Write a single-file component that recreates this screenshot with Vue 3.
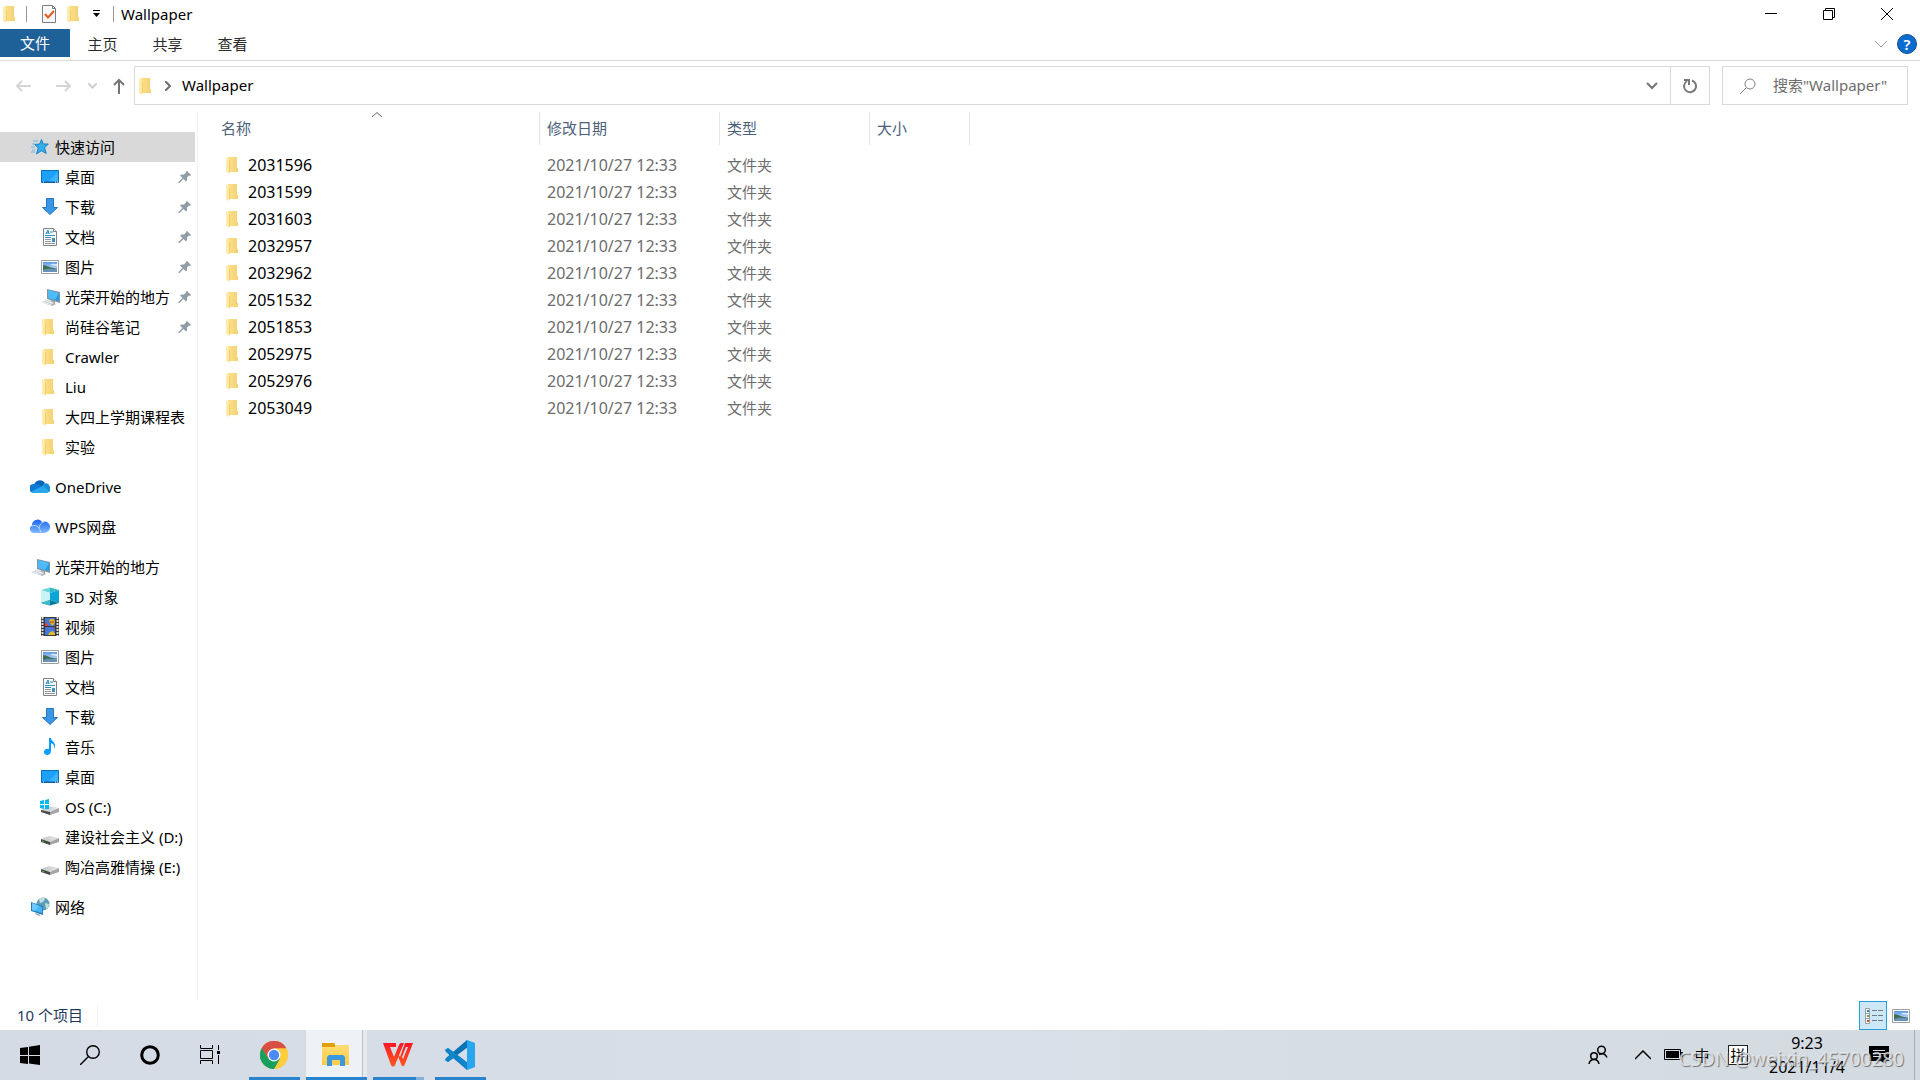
<script setup>
import { ref } from 'vue'

const groups = [
  {
    items: [
      { icon: 'star', label: '快速访问', root: true, selected: true },
      { icon: 'desktop', label: '桌面', pinned: true },
      { icon: 'download', label: '下载', pinned: true },
      { icon: 'document', label: '文档', pinned: true },
      { icon: 'picture', label: '图片', pinned: true },
      { icon: 'computer', label: '光荣开始的地方', pinned: true },
      { icon: 'folder', label: '尚硅谷笔记', pinned: true },
      { icon: 'folder', label: 'Crawler' },
      { icon: 'folder', label: 'Liu' },
      { icon: 'folder', label: '大四上学期课程表' },
      { icon: 'folder', label: '实验' }
    ]
  },
  { items: [{ icon: 'onedrive', label: 'OneDrive', root: true }] },
  { items: [{ icon: 'wpscloud', label: 'WPS网盘', root: true }] },
  {
    items: [
      { icon: 'computer', label: '光荣开始的地方', root: true },
      { icon: 'cube', label: '3D 对象' },
      { icon: 'video', label: '视频' },
      { icon: 'picture', label: '图片' },
      { icon: 'document', label: '文档' },
      { icon: 'download', label: '下载' },
      { icon: 'music', label: '音乐' },
      { icon: 'desktop', label: '桌面' },
      { icon: 'osdrive', label: 'OS (C:)' },
      { icon: 'drive', label: '建设社会主义 (D:)' },
      { icon: 'drive', label: '陶冶高雅情操 (E:)' }
    ]
  },
  { items: [{ icon: 'network', label: '网络', root: true }] }
]

const folders = ['2031596', '2031599', '2031603', '2032957', '2032962', '2051532', '2051853', '2052975', '2052976', '2053049']
const query = ref('')
</script>

<template>
  <div class="screen">
    <svg class="defs" aria-hidden="true">
      <defs>
        <linearGradient id="gFolder" x1="0" x2="1"><stop offset="0" stop-color="#fbe08e" /><stop offset="1" stop-color="#f5d272" /></linearGradient>
        <linearGradient id="gSky" x1="0" x2="0" y1="0" y2="1"><stop offset="0" stop-color="#5b97e8" /><stop offset="1" stop-color="#e4f3fb" /></linearGradient>
        <linearGradient id="gCloud" x1="0" x2="0" y1="0" y2="1"><stop offset="0" stop-color="#1a66ee" /><stop offset="1" stop-color="#7fb9ff" /></linearGradient>
        <linearGradient id="gDrive" x1="0" x2="1"><stop offset="0" stop-color="#c2c3c6" /><stop offset="1" stop-color="#e6e6e8" /></linearGradient>
        <linearGradient id="gWps" x1="0" x2="0" y1="0" y2="1"><stop offset="0" stop-color="#fb1725" /><stop offset="1" stop-color="#ff5a1c" /></linearGradient>
        <linearGradient id="gExp" x1="0" x2="0" y1="0" y2="1"><stop offset="0" stop-color="#ffdd73" /><stop offset="1" stop-color="#fbca4b" /></linearGradient>
      </defs>
      <symbol id="folder" viewBox="0 0 20 20">
        <path d="M4 2h9v11h1v4H4z" fill="url(#gFolder)" /><path d="M2 2l4 3v11l-1 3-3-2z" fill="#ffeaa9" /><path d="M5 5l1 1v11l-1 1z" fill="#f2cd69" />
      </symbol>
      <symbol id="star" viewBox="0 0 20 20">
        <path d="M11.500 2.500l1.800 4.500h5l-3.700 3.800 1.600 5.600-4.700-2.700-5 3.200 1.800-5.900-3.600-3.500 5-.5z" fill="#33aeea" stroke="#1d7fc4" stroke-width="1" />
        <path d="M3 4h5M2 7h3M1 10h4M2 13h3M1 15h4" stroke="#6cb6e6" stroke-width="1" />
      </symbol>
      <symbol id="desktop" viewBox="0 0 20 20">
        <path d="M1.500 3.500h17v12h-17z" fill="#1ba1fa" stroke="#0e70b8" /><path d="M8 15L18 5v10z" fill="#3db3ff" /><path d="M2 15h16" stroke="#0b568f" /><path d="M3 15h1M15 15h1M17 15h1" stroke="#fff" />
      </symbol>
      <symbol id="download" viewBox="0 0 20 20"><path d="M6.500 1.500h7v9h4L10 17.500 2.500 10.500h4z" fill="#3b97e3" stroke="#2378c4" /></symbol>
      <symbol id="document" viewBox="0 0 20 20">
        <path d="M3.500 1.500h10l3 3v14h-13z" fill="#f8fafb" stroke="#818486" /><path d="M13.500 1.500v3h3" fill="#fff" stroke="#818486" />
        <path d="M6 7l2-4 1 4M6 6h3M10 5h3" fill="none" stroke="#258ac5" /><path d="M5 8.500h10M5 10.500h6" stroke="#3392cb" /><path d="M5 12.500h6M5 14.500h6M5 16.500h10" stroke="#939799" /><path d="M12 11h3v4h-3z" fill="#438fc1" />
      </symbol>
      <symbol id="picture" viewBox="0 0 20 20">
        <path d="M1.500 3.500h17v13h-17z" fill="#fff" stroke="#9b9ea2" /><path d="M3 5h14v10H3z" fill="url(#gSky)" />
        <path d="M3 8c4 0 6 3 14 3.500V13H3z" fill="#426e59" /><path d="M3 13c5-2 9-1 14-1v3H3z" fill="#6793b8" /><path d="M10 8c2-2 5-1 7-1v2z" fill="#fff" opacity=".7" />
      </symbol>
      <symbol id="computer" viewBox="0 0 20 20">
        <path d="M7 2l13 3v11L7 12z" fill="#87939c" /><path d="M8 3l11 3v8L8 11z" fill="#1e9fee" /><path d="M8 3l11 3-4 7-7-2z" fill="#4fbaf8" />
        <path d="M11 13l4 1v3l-5-2z" fill="#8b969c" /><path d="M1 15l6-2 8 2-6 3z" fill="#c9cfd4" /><path d="M10 18l4-2 2 1-4 2z" fill="#a9b1b8" /><path d="M3 15l6 2M6 14l6 2" stroke="#eef1f3" />
      </symbol>
      <symbol id="onedrive" viewBox="0 0 20 20">
        <path d="M4 9a6 6 0 0 1 11-3l-4 5z" fill="#0761b5" /><path d="M4 7c3-1 6 1 9 3l-8 6H3A4 4 0 0 1 4 7z" fill="#0d79d5" /><path d="M14 7c3-2 6 1 6 4a3 3 0 0 1-1 4l-7-5z" fill="#1490df" /><path d="M2 14l11-5 6 5c0 2-2 2-3 2H4c-1 0-2-1-2-2z" fill="#28a8ea" />
      </symbol>
      <symbol id="wpscloud" viewBox="0 0 20 20">
        <path d="M4 16a4 4 0 0 1-2-7.500A5.500 5.500 0 0 1 12 5a5 5 0 0 1 5 10l-3 1z" fill="url(#gCloud)" /><path d="M2 9c5-2 8 2 9 7M9 11c1-4 2-5 5-6" fill="none" stroke="#b9dcff" stroke-width="1" />
      </symbol>
      <symbol id="cube" viewBox="0 0 20 20">
        <path d="M1 3l9-2.500V6z" fill="#69d5dd" /><path d="M10 .5L19 3l-9 3z" fill="#35b9c8" /><path d="M1 3l9 3v7l-9 3z" fill="#c9f4f5" /><path d="M10 6l9-3v13l-9-3z" fill="#0ba6d7" /><path d="M1 16l9-3 9 3-9 2.500z" fill="#067c9d" /><path d="M1 16l9-3v5.500z" fill="#3cbcc8" />
      </symbol>
      <symbol id="video" viewBox="0 0 20 20">
        <path d="M1 0h18v19H1z" fill="#38393b" /><path d="M2.500 0v19M17.500 0v19" stroke="#d9dada" stroke-width="2" stroke-dasharray="2 1" /><path d="M5 1h10v8H5zM5 10h10v8H5z" fill="#4778d8" />
        <path d="M9 4a3 3 0 1 1 5 3l-2 2z" fill="#e0b61e" /><path d="M5 6l3 1v2H5z" fill="#e24439" /><path d="M10 15l3-1 2 3v1H8z" fill="#e5bb25" /><path d="M10 5h4M13 11h2" stroke="#bd3328" stroke-width="1" />
      </symbol>
      <symbol id="music" viewBox="0 0 20 20"><path d="M9 1h2c0 3 5 4 4 9l-1 2c1-4-1-5-3-6v8c0 5-7 5-7 1 0-3 3-4 5-3z" fill="#079eff" /></symbol>
      <symbol id="drive" viewBox="0 0 20 20"><path d="M1 12l8-3 10 2-9 4z" fill="url(#gDrive)" /><path d="M1 12l9 3v3l-9-3z" fill="#454947" /><path d="M10 15l9-4v4l-9 3z" fill="#a3a4a5" /><path d="M2 14l2 1" stroke="#54c83c" /></symbol>
      <symbol id="osdrive" viewBox="0 0 20 20"><path d="M1 13l8-4 10 2-9 4z" fill="url(#gDrive)" /><path d="M1 13l9 2v3l-9-3z" fill="#454947" /><path d="M10 15l9-4v4l-9 3z" fill="#a3a4a5" /><path d="M0 4l4-1v4H0zM5 3l4-1v5H5zM0 8h4v4l-4-1zM5 8h4v4H5z" fill="#0ab6ef" /></symbol>
      <symbol id="network" viewBox="0 0 20 20">
        <circle cx="13" cy="7" r="6.500" fill="#5a9cba" /><path d="M9 2c3-2 5-1 6 0l-2 3-3 1zM15 6l4 1c0 3-2 5-3 5z" fill="#c1dfd8" /><path d="M1 5l12 4v9L1 14z" fill="#277fb5" /><path d="M2 6l10 4v6L2 13z" fill="#43b4f4" /><path d="M2 6l7 3-4 5-3-1z" fill="#6bc9fc" /><path d="M6 16l5 2-2 1-4-2z" fill="#9caab2" />
      </symbol>
      <symbol id="pin" viewBox="0 0 14 14"><path d="M9 1l4 4-1 1-1-.5-2 2c.5 2 0 3-1 4L5.500 9 1.500 13H.5v-1L4.500 8 2 5.500c1-1 2-1.300 4-1l2-2L8 1.500z" fill="#929ca4" /></symbol>
    </svg>

    <header class="titlebar">
      <svg class="ico"><use href="#folder" /></svg>
      <i class="bar bar-first"></i>
      <button class="quick" aria-label="属性">
        <svg width="16" height="20" viewBox="0 0 16 20"><path d="M1.500 1.500h10l3 3v14h-13z" fill="#f7f8f9" stroke="#7c7f81" /><path d="M11.500 1.500v3h3" fill="none" stroke="#7c7f81" /><path d="M4 10l3 3.500L13 7" fill="none" stroke="#e8591c" stroke-width="2" /></svg>
      </button>
      <button class="quick" aria-label="新建文件夹"><svg class="ico"><use href="#folder" /></svg></button>
      <button class="quick narrow" aria-label="自定义快速访问工具栏"><svg width="7" height="8"><path d="M0 .5h7" stroke="#000" /><path d="M0 3h7L3.500 7z" /></svg></button>
      <i class="bar"></i>
      <h1>Wallpaper</h1>
      <div class="window-buttons">
        <button aria-label="最小化"><svg width="12" height="12"><path d="M0 5.500h12" stroke="#000" /></svg></button>
        <button aria-label="还原"><svg width="12" height="12" fill="none" stroke="#000"><path d="M.5 2.500h9v9h-9zM2.500 2.500v-2h9v9h-2" /></svg></button>
        <button aria-label="关闭"><svg width="12" height="12"><path d="M0 0l12 12M12 0L0 12" stroke="#000" /></svg></button>
      </div>
    </header>

    <div class="ribbon">
      <button class="tab file">文件</button>
      <button class="tab">主页</button>
      <button class="tab">共享</button>
      <button class="tab">查看</button>
      <div class="ribbon-end">
        <button aria-label="展开功能区"><svg width="12" height="8" fill="none"><path d="M0 1l6 6 6-6" stroke="#9a9da0" /></svg></button>
        <button class="help" aria-label="帮助">?</button>
      </div>
    </div>

    <div class="navbar">
      <button class="step" aria-label="后退"><svg width="16" height="12" fill="none" stroke="#d5d5d5" stroke-width="2"><path d="M15 6H1M6 1L1 6l5 5" /></svg></button>
      <button class="step" aria-label="前进"><svg width="16" height="12" fill="none" stroke="#d5d5d5" stroke-width="2"><path d="M1 6h14M10 1l5 5-5 5" /></svg></button>
      <button class="small" aria-label="最近浏览的位置"><svg width="9" height="6" fill="none" stroke="#d0d0d0" stroke-width="2"><path d="M0 0l4.500 4.500L9 0" /></svg></button>
      <button class="small" aria-label="向上"><svg width="12" height="16" fill="none" stroke="#757575" stroke-width="2"><path d="M6 16V2M1 7l5-5 5 5" /></svg></button>
      <div class="address">
        <svg class="ico"><use href="#folder" /></svg>
        <svg class="crumb" width="6" height="10" fill="none" stroke="#707070" stroke-width="2"><path d="M0 0l5 5-5 5" /></svg>
        <a href="#">Wallpaper</a>
        <button class="drop" aria-label="以前的位置"><svg width="12" height="8" fill="none" stroke="#757575" stroke-width="2"><path d="M1 1l5 5 5-5" /></svg></button>
        <button class="refresh" aria-label="刷新"><svg width="16" height="16" fill="none" stroke="#777" stroke-width="2"><path d="M10 2.500a6 6 0 1 1-5 .5M2 2h5v5" /></svg></button>
      </div>
      <label class="search">
        <svg width="16" height="16" fill="none" stroke="#808080"><circle cx="10" cy="6" r="5" /><path d="M6 10l-6 6" /></svg>
        <input v-model="query" type="text" placeholder="搜索&quot;Wallpaper&quot;" aria-label="搜索" />
      </label>
    </div>

    <div class="body">
      <nav class="sidebar">
        <ul v-for="(group, g) in groups" :key="g">
          <li v-for="item in group.items" :key="item.label">
            <a href="#" class="node" :class="{ root: item.root, selected: item.selected }">
              <svg class="ico"><use :href="'#' + item.icon" /></svg>
              <span>{{ item.label }}</span>
              <svg v-if="item.pinned" class="pin"><use href="#pin" /></svg>
            </a>
          </li>
        </ul>
      </nav>

      <main class="files">
        <table>
          <thead>
            <tr>
              <th class="c-name"><button>名称<svg class="sort" width="10" height="6" fill="none" stroke="#666"><path d="M0 5l5-4.500L10 5" /></svg></button></th>
              <th class="c-date"><button>修改日期</button></th>
              <th class="c-type"><button>类型</button></th>
              <th class="c-size"><button>大小</button></th>
            </tr>
          </thead>
          <tbody>
            <tr v-for="name in folders" :key="name">
              <td class="name"><div><svg class="ico"><use href="#folder" /></svg>{{ name }}</div></td>
              <td class="date">2021/10/27 12:33</td>
              <td>文件夹</td>
              <td></td>
            </tr>
          </tbody>
        </table>
      </main>
    </div>

    <footer class="status">
      <span class="count">10 个项目</span>
      <div class="views">
        <button class="view on" aria-label="详细信息">
          <svg width="20" height="18" fill="none"><path d="M2.500 1.500h4v15h-4zM2 6.500h5M2 11.500h5" stroke="#999fa5" fill="#fff" /><path d="M4 4h2" stroke="#3388c4" stroke-width="2" /><path d="M4 9h2" stroke="#759f33" stroke-width="2" /><path d="M4 14h2" stroke="#d14e2d" stroke-width="2" /><path d="M9 3.500h5M15 3.500h5M9 8.500h5M15 8.500h5M9 13.500h5M15 13.500h5" stroke="#747a80" /></svg>
        </button>
        <button class="view" aria-label="大图标"><svg class="ico"><use href="#picture" /></svg></button>
      </div>
    </footer>

    <div class="taskbar">
      <button class="sys" aria-label="开始"><svg width="20" height="20"><path d="M0 3l8-1v8H0zM9 1.800L20 0v10H9zM0 11h8v8l-8-1zM9 11h11v9L9 18.500z" /></svg></button>
      <button class="sys" aria-label="搜索"><svg width="20" height="20" fill="none" stroke="#000" stroke-width="1.400"><circle cx="13" cy="7" r="6.300" /><path d="M8.500 11.500L0 20" /></svg></button>
      <button class="sys" aria-label="Cortana"><svg width="20" height="20" fill="none" stroke="#000" stroke-width="3"><circle cx="10" cy="10" r="8.300" /></svg></button>
      <button class="sys" aria-label="任务视图"><svg width="20" height="20" fill="none" stroke="#000" stroke-width="1"><path d="M.5 0v3.500h12V0M.5 5.500h12v8H.5zM.5 19v-3.500h12V19M18.500 0v5M18.500 10v9" /><path d="M17 6h3v3h-3z" fill="#000" stroke="none" /></svg></button>
      <button class="app first" aria-label="Chrome">
        <svg width="28" height="28" viewBox="0 0 28 28"><circle cx="14" cy="14" r="14" fill="#fcc934" /><path d="M14 14L1.900 7A14 14 0 0 1 26.200 7.200H14z" fill="#d94f43" /><path d="M1.900 7A14 14 0 0 0 14 28l6-10.500L14 14 8 17.500z" fill="#17a05d" /><path d="M14 14l6 3.500L14 28a14 14 0 0 0 12.200-20.800H14z" fill="#fdcd3e" /><path d="M1.900 7l6.100 10.500L14 14V7.200h12.200A14 14 0 0 0 1.900 7z" fill="#d94f43" /><path d="M1.900 7A14 14 0 0 0 14 28l6-10.500H8z" fill="#17a05d" /><circle cx="14" cy="14" r="6.500" fill="#fff" /><circle cx="14" cy="14" r="5.200" fill="#4c8bf5" /></svg>
      </button>
      <button class="app stacked active" aria-label="文件资源管理器">
        <svg width="28" height="24" viewBox="0 0 28 24"><path d="M0 2h27v20H0z" fill="url(#gExp)" /><path d="M0 0h12l1 1v3H0z" fill="#dfa00b" /><path d="M7 12h14l2 2v9h-5v-6h-8v6H5v-9z" fill="#3b98de" /></svg>
      </button>
      <button class="app double" aria-label="WPS Office">
        <svg width="30" height="24" viewBox="0 0 30 24"><path d="M0 0h13v4H7l4 10 5-12c1-2 2-2 3-2h2L12 22c-1 2-3 2-4 0z" fill="url(#gWps)" /><path d="M13 8l4 6 5-14h8l-8 21c-1 3-3 3-4 0z" fill="url(#gWps)" /><path d="M23 4h2l-5 12-1-2z" fill="#d7dde6" /></svg>
      </button>
      <button class="app last" aria-label="Visual Studio Code">
        <svg width="30" height="30" viewBox="0 0 30 30"><path d="M0 10l3-2 20 15-1 7L1 12z" fill="#0c7ec5" /><path d="M0 20l3 2L23 7l-1-7L1 18z" fill="#0874b5" /><path d="M0 20l3 2 8-6 11 14 1-7L3 8 0 10l5 5z" fill="#1185ca" /><path d="M22 0l8 3v24l-8 3z" fill="#28a5ee" /><path d="M14 15l8-7v14z" fill="#d7dde6" /></svg>
      </button>

      <div class="tray">
        <button class="people" aria-label="人脉"><svg width="20" height="20" fill="none" stroke="#000" stroke-width="1.500"><circle cx="13.500" cy="5" r="3.800" /><path d="M11 9.500l3-1c3 0 4 2 5 4" /><circle cx="6" cy="11" r="3.300" /><path d="M1 19c1-6 9-6 10 0" /></svg></button>
        <button class="more" aria-label="显示隐藏的图标"><svg width="16" height="10" fill="none"><path d="M0 9l8-8 8 8" stroke="#000" stroke-width="1.500" /></svg></button>
        <button class="battery" aria-label="电池"><svg width="20" height="12"><path d="M.5 .5h16v10H.5z" fill="none" stroke="#000" /><path d="M2 2h13v7H2zM17 3h2v5h-2z" /></svg></button>
        <button class="ime">中</button>
        <button class="ime"><span class="boxed">拼</span></button>
        <button class="clock"><span>9:23</span><span>2021/11/4</span></button>
        <button class="notice" aria-label="通知"><svg width="20" height="18"><path d="M0 0h20v15h-4v3l-4-3H0z" /><path d="M4 4.500h12M4 7.500h12M4 10.500h8" stroke="#d8dee6" /></svg></button>
        <button class="peek" aria-label="显示桌面"></button>
      </div>
      <div class="watermark">CSDN @weixin_45700280</div>
    </div>
  </div>
</template>

<style>
body { margin: 0; background: #fff; }
</style>

<style scoped>
.screen {
  display: flex;
  flex-direction: column;
  min-height: 100vh;
  font: 15px/20px "Noto Sans", "Noto Sans CJK SC", sans-serif;
  color: #000;
}
.screen * { box-sizing: border-box; }
.defs { position: absolute; width: 0; height: 0; }
button { display: flex; align-items: center; justify-content: center; margin: 0; padding: 0; border: 0; background: none; color: inherit; font: inherit; flex: none; }
a { color: inherit; text-decoration: none; }
svg { flex: none; display: block; }
.ico { width: 20px; height: 20px; }

.titlebar { display: flex; align-items: center; height: 29px; padding: 0 0 2px 1px; }
.bar { width: 1px; height: 16px; background: #999; margin: 0 7px 0 8px; }
.bar-first { margin: 0 9px 0 5px; }
.quick { width: 26px; height: 27px; }
.quick.narrow { width: 17px; }
.titlebar h1 { margin: 0; font-size: 15px; font-weight: 400; }
.window-buttons { display: flex; margin-left: auto; padding-right: 4px; }
.window-buttons button { width: 58px; height: 27px; }

.ribbon { display: flex; height: 32px; border-bottom: 1px solid #dadbdc; color: #2b2b2b; }
.tab { width: 65px; height: 30px; }
.tab.file { width: 70px; height: 28px; background: #1e6199; color: #fff; }
.ribbon-end { display: flex; align-items: center; gap: 10px; margin-left: auto; padding: 0 3px 2px 0; }
.help { width: 20px; height: 20px; border-radius: 50%; border: 1px solid #155291; background: #0a6cce; color: #fff; font-weight: 600; }

.navbar { display: flex; align-items: center; height: 49px; padding: 0 12px 0 4px; }
.step { width: 39px; height: 30px; }
.small { width: 21px; height: 30px; }
.small + .small { width: 31px; }
.address { display: flex; flex: 1; align-items: center; height: 39px; padding-left: 2px; border: 1px solid #d9d9d9; }
.address a { padding-bottom: 2px; }
.crumb { margin: 0 11px 0 8px; }
.drop { width: 36px; height: 37px; margin-left: auto; }
.refresh { width: 39px; height: 37px; border-left: 1px solid #d9d9d9; }
.search { display: flex; align-items: center; gap: 17px; width: 186px; height: 39px; margin-left: 12px; padding-left: 17px; border: 1px solid #d9d9d9; }
.search input { flex: 1; min-width: 0; padding: 0 0 2px; border: 0; outline: 0; background: none; font: inherit; color: #000; }
.search input::placeholder { color: #6d6d6d; opacity: 1; }

.body { display: flex; flex: 1; padding-top: 2px; }
.sidebar { width: 198px; padding-top: 20px; border-right: 1px solid #f2f2f2; }
.sidebar ul { margin: 0 0 10px; padding: 0; list-style: none; }
.node { display: flex; align-items: center; gap: 5px; height: 30px; margin-right: 2px; padding: 0 3px 0 40px; white-space: nowrap; }
.node.root { padding-left: 30px; }
.node.selected { background: #d9d9d9; }
.pin { width: 14px; height: 14px; margin-left: auto; }

.files { flex: 1; }
table { border-collapse: collapse; table-layout: fixed; width: 772px; }
th { padding: 0 0 7px; font-weight: 400; color: #4c607a; }
th button { position: relative; justify-content: flex-start; width: 100%; height: 33px; padding: 0 0 2px 7px; border-right: 1px solid #e5e5e5; }
.c-name { width: 342px; }
.c-name button { padding-left: 23px; }
.c-date { width: 180px; }
.c-type { width: 150px; }
.c-size { width: 100px; }
.sort { position: absolute; top: 0; left: 51%; }
td { height: 27px; padding: 0 0 1px 7px; color: #6d6d6d; }
.name { padding-left: 26px; color: #000; font-size: 16px; }
.name div { display: flex; align-items: center; gap: 4px; }
.date { font-size: 16px; }

.status { display: flex; align-items: center; height: 29px; color: #1e395b; }
.count { padding: 0 14px 2px 17px; border-right: 1px solid #f0f0f0; }
.views { display: flex; margin-left: auto; padding-right: 5px; }
.view { width: 28px; height: 29px; }
.view.on { border: 1px solid #26a0da; background: #cce8f6; }

.taskbar { position: relative; display: flex; height: 50px; background: linear-gradient(90deg, #d4dbe4, #d8dfe8 50%, #d3dbe1); }
.sys { width: 60px; height: 50px; }
.app { width: 51px; height: 50px; border-bottom: 3px solid #2984d0; padding: 3px 2px 0 0; }
.app.first { margin-left: 9px; }
.app.stacked { width: 61px; margin-left: 6px; background: linear-gradient(90deg, #eef1f5 56px, #b9c4cf 56px 57px, #e5eaef 57px); }
.app.double { margin-left: 6px; border-image: linear-gradient(90deg, #2984d0 41px, #82b1de 41px) 3; border-width: 0 0 3px; border-style: solid; }
.app.last { margin-left: 11px; }
.tray { display: flex; margin-left: auto; }
.tray button { height: 50px; }
.people { width: 48px; }
.more, .notice { width: 42px; }
.battery { width: 20px; }
.ime { width: 36px; }
.boxed { display: block; width: 20px; height: 20px; line-height: 18px; border: 1px solid #222; background: #fff; }
.tray .clock { flex-direction: column; gap: 4px; width: 102px; font-size: 16px; }
.tray .peek { width: 6px; margin-left: 14px; border-left: 1px solid #a5adb5; }
.watermark { position: absolute; right: 16px; bottom: 7px; font-size: 19px; line-height: 28px; color: rgba(235, 237, 240, .8); text-shadow: 1px 1px 1px rgba(90, 90, 90, .8); pointer-events: none; }
</style>
